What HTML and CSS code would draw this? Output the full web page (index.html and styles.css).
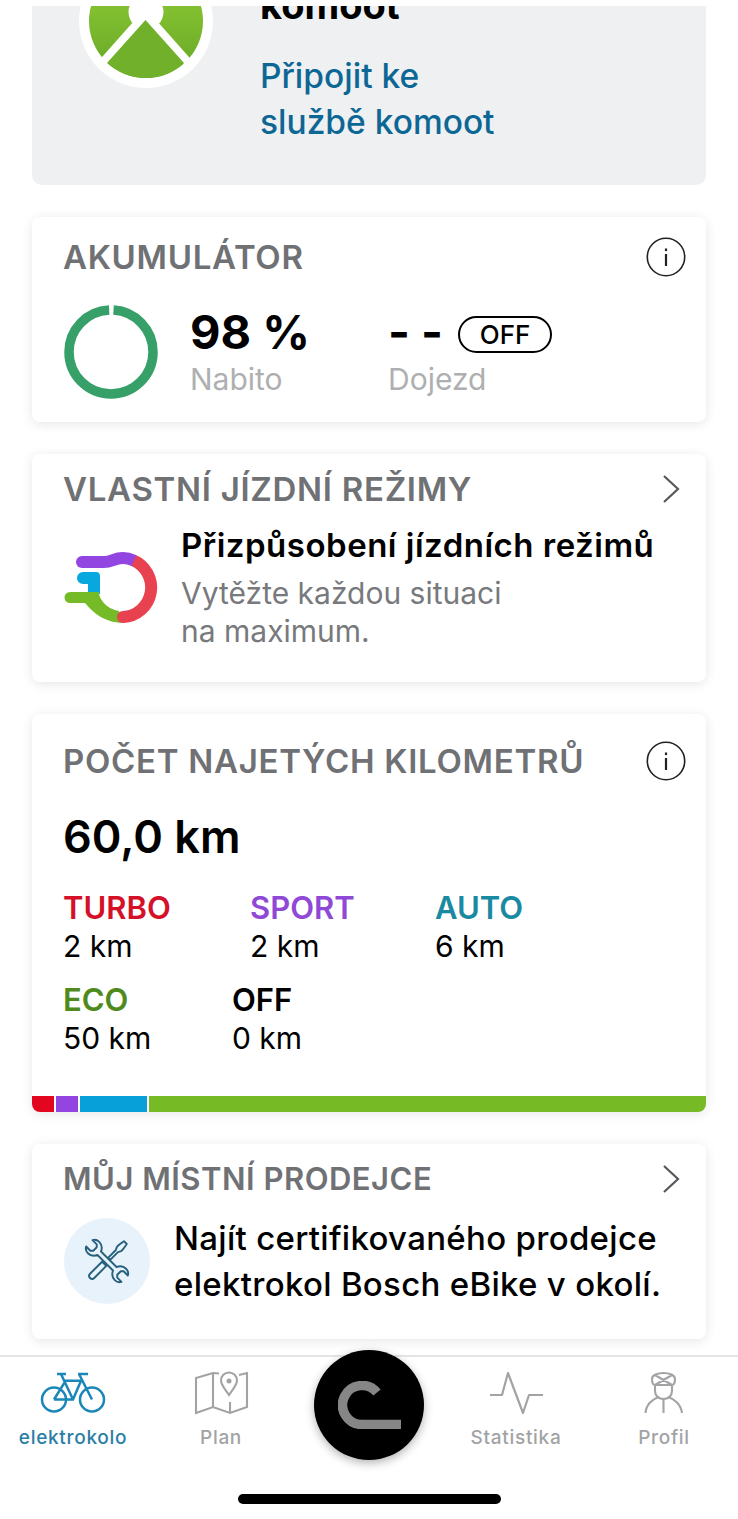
FILE: index.html
```html
<!DOCTYPE html>
<html lang="cs">
<head>
<meta charset="utf-8">
<title>eBike Flow</title>
<link rel="stylesheet" href="styles.css">
</head>
<body>
<div class="app">
  <main class="scroll">
    <section class="komoot">
      <svg class="komoot-logo" viewBox="0 0 134 134" aria-hidden="true">
        <defs><linearGradient id="kg" x1="0" y1="0" x2="0" y2="1"><stop offset="0.3" stop-color="#86c232"/><stop offset="1" stop-color="#66a825"/></linearGradient></defs>
        <circle cx="67" cy="67" r="67" fill="#fff"/>
        <circle cx="67" cy="67" r="57" fill="url(#kg)"/>
        <circle cx="67" cy="58" r="17.500" fill="#fff"/>
        <path d="M22.500 110 L66.500 60.500 L110.500 110" fill="none" stroke="#fff" stroke-width="8.500"/>
        <path d="M66.500 66 L28 109 A57 57 0 0 0 105 109 Z" fill="#70b02a"/>
      </svg>
      <div class="komoot-text">
        <h2 class="komoot-title">komoot</h2>
        <a class="komoot-link">Připojit ke<br>službě komoot</a>
      </div>
    </section>

    <section class="card battery">
      <div class="card-head">
        <h3 class="card-title">AKUMULÁTOR</h3>
        <svg class="info" viewBox="0 0 40 40" aria-hidden="true"><circle cx="20" cy="20" r="18.700" fill="none" stroke="#222" stroke-width="1.600"/><rect x="18.900" y="17" width="2.200" height="12" fill="#222"/><rect x="18.900" y="11.500" width="2.200" height="2.600" fill="#222"/></svg>
      </div>
      <div class="battery-body">
        <svg class="ring" viewBox="0 0 96 96" aria-hidden="true"><circle cx="48" cy="48" r="42" fill="none" stroke="#37a069" stroke-width="9.500" stroke-dasharray="259 5" stroke-dashoffset="-2.600" transform="rotate(-90 48 48)"/></svg>
        <div class="stat stat-charge">
          <div class="stat-value">98 %</div>
          <div class="stat-label">Nabito</div>
        </div>
        <div class="stat">
          <div class="stat-row"><span class="stat-value">- -</span><span class="off-pill">OFF</span></div>
          <div class="stat-label">Dojezd</div>
        </div>
      </div>
    </section>

    <section class="card modes">
      <div class="card-head">
        <h3 class="card-title">VLASTNÍ JÍZDNÍ REŽIMY</h3>
        <svg class="chevron" viewBox="0 0 20 30" aria-hidden="true"><path d="M3 2 L17 15 L3 28" fill="none" stroke="#55585c" stroke-width="2.200"/></svg>
      </div>
      <div class="modes-body">
        <svg class="modes-icon" viewBox="0 0 94 72" aria-hidden="true">
          <path d="M19 20 H32 Q36 20 36 24 V42 H24 V32 H19 A6 6 0 0 1 19 20 Z" fill="#07a8dd"/>
          <path d="M6 40 H35 V42.300 A23.500 23.500 0 0 0 55 58.900 L60 71 C42 71 30 62 21 51 H6 A5.500 5.500 0 0 1 6 40 Z" fill="#75bb28"/>
          <path d="M69 8.300 A29.500 29.500 0 0 1 59 65" stroke="#e8414f" stroke-width="12" fill="none"/>
          <circle cx="59" cy="65" r="6" fill="#e8414f"/>
          <path d="M18 10 H40 C48 10 50 6 59 6 C63 6 66 6.800 70 8.600" stroke="#9345e2" stroke-width="12" fill="none"/>
          <circle cx="18" cy="10" r="6" fill="#9345e2"/>
        </svg>
        <div class="modes-text">
          <h4 class="modes-title">Přizpůsobení jízdních režimů</h4>
          <p class="modes-desc">Vytěžte každou situaci<br>na maximum.</p>
        </div>
      </div>
    </section>

    <section class="card km">
      <div class="card-head">
        <h3 class="card-title">POČET NAJETÝCH KILOMETRŮ</h3>
        <svg class="info" viewBox="0 0 40 40" aria-hidden="true"><circle cx="20" cy="20" r="18.700" fill="none" stroke="#222" stroke-width="1.600"/><rect x="18.900" y="17" width="2.200" height="12" fill="#222"/><rect x="18.900" y="11.500" width="2.200" height="2.600" fill="#222"/></svg>
      </div>
      <div class="km-total">60,0 km</div>
      <div class="km-row">
        <div class="mode mode-turbo"><div class="mode-name turbo">TURBO</div><div class="mode-val">2 km</div></div>
        <div class="mode mode-sport"><div class="mode-name sport">SPORT</div><div class="mode-val">2 km</div></div>
        <div class="mode"><div class="mode-name auto">AUTO</div><div class="mode-val">6 km</div></div>
      </div>
      <div class="km-row km-row-2">
        <div class="mode mode-eco"><div class="mode-name eco">ECO</div><div class="mode-val">50 km</div></div>
        <div class="mode"><div class="mode-name off">OFF</div><div class="mode-val">0 km</div></div>
      </div>
      <div class="km-bar">
        <span class="seg seg-turbo"></span><span class="seg seg-sport"></span><span class="seg seg-auto"></span><span class="seg seg-eco"></span>
      </div>
    </section>

    <section class="card dealer">
      <div class="card-head">
        <h3 class="card-title card-title-small">MŮJ MÍSTNÍ PRODEJCE</h3>
        <svg class="chevron" viewBox="0 0 20 30" aria-hidden="true"><path d="M3 2 L17 15 L3 28" fill="none" stroke="#55585c" stroke-width="2.200"/></svg>
      </div>
      <div class="dealer-body">
        <div class="dealer-icon">
          <svg viewBox="0 0 42 42" aria-hidden="true">
            <g fill="#e8f2fb" stroke="#27607c" stroke-width="1.900" stroke-linejoin="round">
              <g transform="rotate(45 21 21)">
                <path d="M19 -5 H23 L24 1 V4 L22.500 7 V18 H19.500 V7 L18 4 V1 Z"/>
                <path d="M18 25 H24 V42 A3 3 0 0 1 18 42 Z"/>
              </g>
              <path transform="rotate(-45 21 21)" d="M18.500 10 C15 8.500 13 6 13 2 C13 -1 14.500 -3 16.500 -4 V2 L18.500 4 H23.500 L25.500 2 V-4 C27.500 -3 29 -1 29 2 C29 6 27 8.500 23.500 10 V32 C27 33.500 29 36 29 40 C29 43 27.500 45 25.500 46 V40 L23.500 38 H18.500 L16.500 40 V46 C14.500 45 13 43 13 40 C13 36 15 33.500 18.500 32 Z"/>
            </g>
          </svg>
        </div>
        <p class="dealer-text">Najít certifikovaného prodejce elektrokol Bosch eBike v okolí.</p>
      </div>
    </section>
  </main>

  <nav class="tabbar">
    <a class="tab tab-active">
      <svg class="tab-icon icon-bike" viewBox="0 0 64 40" aria-hidden="true"><g fill="none" stroke="#1b86b8" stroke-width="2.500"><circle cx="13" cy="26.500" r="12"/><circle cx="51" cy="26.500" r="12"/><path d="M13 26.500 L24.700 7.700 H40 L32 26.500 H13 M20 1 L32 26.500 M38 1 L51 26.500 M16 1 H25 M37 1 H47"/></g></svg>
      <span class="tab-label">elektrokolo</span>
    </a>
    <a class="tab tab-plan">
      <svg class="tab-icon icon-map" viewBox="0 0 53 42" aria-hidden="true"><g fill="none" stroke="#a2a3a5" stroke-width="2.100"><path d="M24 1.500 L18 1 L1 6 V41 L18 35 L35 41 L52 35 V1 L44 3 M18 1 V35 M35 30 V41"/><path d="M34 23 C30 17 26 13 26 8.500 A8 8 0 0 1 42 8.500 C42 13 38 17 34 23 Z"/></g><circle cx="34" cy="9" r="2.500" fill="#a2a3a5"/></svg>
      <span class="tab-label">Plan</span>
    </a>
    <div class="tab-spacer"></div>
    <a class="tab tab-stat">
      <svg class="tab-icon icon-stat" viewBox="0 0 53 42" aria-hidden="true"><path d="M0 23 H12 L18 1 L33 41 L39 23 H53" fill="none" stroke="#a2a3a5" stroke-width="2.200" stroke-linejoin="round"/></svg>
      <span class="tab-label">Statistika</span>
    </a>
    <a class="tab tab-profile">
      <svg class="tab-icon icon-profile" viewBox="0 0 40 42" aria-hidden="true"><g fill="none" stroke="#a2a3a5" stroke-width="2.100"><path d="M8 7 C8 3 14 1 19.500 1 C25 1 31 3 31 7 C31 10 30 13 28 13 H11 C9 13 8 10 8 7 Z M11 3 L28 13 M28 3 L11 13"/><path d="M11 14 V19 C11 24 15 27 19.500 27 C24 27 28 24 28 19 V14"/><path d="M1.500 41 C2 33 8 27 15 25 M38 41 C37 33 31 27 24 25 M19.500 27 V41"/></g></svg>
      <span class="tab-label">Profil</span>
    </a>
    <button class="fab" aria-label="Start">
      <svg viewBox="0 0 63 48" aria-hidden="true"><path d="M39 11.500 A19.500 19.500 0 1 0 24 43.500 H63" fill="none" stroke="#868686" stroke-width="9.500"/></svg>
    </button>
    <div class="home-bar"></div>
  </nav>
  <div class="top-strip"></div>
</div>
</body>
</html>
```

FILE: styles.css
```css
* { box-sizing: border-box; }
html, body { margin: 0; padding: 0; background: #fff; }
body { font-family: Inter, "Noto Sans", "Liberation Sans", sans-serif; color: #000; }
h2, h3, h4, p { margin: 0; font: inherit; }

.app { position: relative; width: 738px; height: 1519px; overflow: hidden; display: flex; flex-direction: column; }
.scroll { height: 1355px; flex: none; padding: 0 32px; display: flex; flex-direction: column; gap: 32px; overflow: hidden; }
.top-strip { position: absolute; left: 0; top: 0; width: 100%; height: 6px; background: #fff; }

.komoot { flex: none; height: 185px; background: #eff0f2; border-radius: 0 0 10px 10px; display: flex; padding-left: 47px; gap: 47px; }
.komoot-logo { flex: none; width: 134px; height: 134px; margin-top: -46px; }
.komoot-text { margin-top: -16px; }
.komoot-title { font-size: 38px; line-height: 42px; font-weight: 700; }
.komoot-link { display: block; margin-top: 27px; font-size: 33.500px; line-height: 46px; font-weight: 500; color: #0d6795; }

.card { flex: none; background: #fff; border-radius: 8px; box-shadow: 0 2px 12px rgba(0,0,0,.1); padding: 0 20px 0 31px; }
.card-head { display: flex; justify-content: space-between; align-items: center; }
.card-title { font-size: 33px; line-height: 40px; font-weight: 600; letter-spacing: .7px; color: #6f7175; }
.card-title-small { font-size: 31px; letter-spacing: .5px; }
.info { width: 40px; height: 40px; flex: none; }
.chevron { width: 20px; height: 30px; flex: none; margin-right: 5px; }

.battery { height: 205px; padding-top: 20px; }
.battery-body { display: flex; margin-top: 28px; align-items: flex-start; }
.ring { width: 96px; height: 96px; flex: none; margin-top: -1px; }
.stat-charge { margin-left: 31px; width: 198px; }
.stat-value { font-size: 47px; line-height: 54px; font-weight: 700; }
.stat-row { display: flex; align-items: center; }
.off-pill { margin-left: 15px; margin-top: 4px; width: 94px; height: 37px; border: 2px solid #000; border-radius: 19px; font-size: 26px; font-weight: 500; line-height: 33px; text-align: center; }
.stat-label { margin-top: 1px; font-size: 30px; line-height: 38px; color: #aeafb1; }

.modes { height: 228px; padding-top: 15px; }
.modes-body { display: flex; margin-top: 15px; }
.modes-icon { width: 94px; height: 72px; flex: none; margin-top: 28px; margin-left: 1px; overflow: visible; }
.modes-text { margin-left: 23px; }
.modes-title { font-size: 33px; line-height: 42px; font-weight: 600; letter-spacing: .5px; white-space: nowrap; }
.modes-desc { margin-top: 9px; font-size: 30px; line-height: 37.500px; color: #77797c; }

.km { height: 398px; padding-top: 27px; position: relative; }
.km-total { margin-top: 29px; font-size: 45px; line-height: 54px; font-weight: 600; }
.km-row { display: flex; margin-top: 25px; }
.km-row-2 { margin-top: 16px; }
.mode-turbo { width: 187px; }
.mode-sport { width: 185px; }
.mode-eco { width: 169px; }
.mode-name { font-size: 31px; line-height: 38px; font-weight: 600; }
.mode-val { font-size: 30px; line-height: 38px; }
.turbo { color: #d5112a; }
.sport { color: #8f49d6; }
.auto { color: #1a8aa3; }
.eco { color: #4f8a1c; }
.off { color: #000; }
.km-bar { position: absolute; left: 0; right: 0; bottom: 0; height: 16px; display: flex; gap: 2px; overflow: hidden; border-radius: 0 0 8px 8px; }
.seg { display: block; height: 16px; }
.seg-turbo { width: 22px; background: #e2061f; }
.seg-sport { width: 22px; background: #9345e2; }
.seg-auto { width: 67px; background: #07a0d8; }
.seg-eco { flex: 1; background: #76ba26; }

.dealer { height: 195px; padding-top: 15px; }
.dealer-body { display: flex; align-items: center; margin-top: 16px; }
.dealer-icon { width: 86px; height: 86px; flex: none; margin-left: 1px; border-radius: 50%; background: #e8f2fb; display: flex; align-items: center; justify-content: center; }
.dealer-icon svg { width: 42px; height: 42px; overflow: visible; }
.dealer-text { margin-left: 24px; font-size: 33px; line-height: 46px; font-weight: 500; letter-spacing: .3px; width: 530px; }

.tabbar { position: relative; flex: 1; border-top: 2px solid #e4e5e6; background: #fff; display: flex; padding-top: 15px; align-items: flex-start; }
.tab { flex: none; display: flex; flex-direction: column; align-items: center; }
.tab-active { width: 146px; }
.tab-plan { width: 150px; }
.tab-spacer { width: 146px; flex: none; }
.tab-stat { width: 148px; }
.tab-profile { width: 148px; }
.tab-icon { display: block; overflow: visible; height: 42px; width: 53px; }
.icon-bike { width: 64px; height: 40px; margin-top: 1px; margin-bottom: 1px; }
.icon-profile { width: 40px; }
.tab-label { margin-top: 12px; font-size: 19px; line-height: 24px; font-weight: 500; letter-spacing: .7px; color: #a2a3a5; }
.tab-active .tab-label { color: #2a7ea6; }
.fab { position: absolute; left: 314px; top: -7px; width: 110px; height: 110px; border: 0; padding: 0; border-radius: 50%; background: #000; box-shadow: 0 3px 10px rgba(0,0,0,.3); display: flex; align-items: center; justify-content: center; }
.fab svg { width: 63px; height: 48px; }
.home-bar { position: absolute; left: 238px; top: 137px; width: 263px; height: 10px; border-radius: 5px; background: #000; }
```
